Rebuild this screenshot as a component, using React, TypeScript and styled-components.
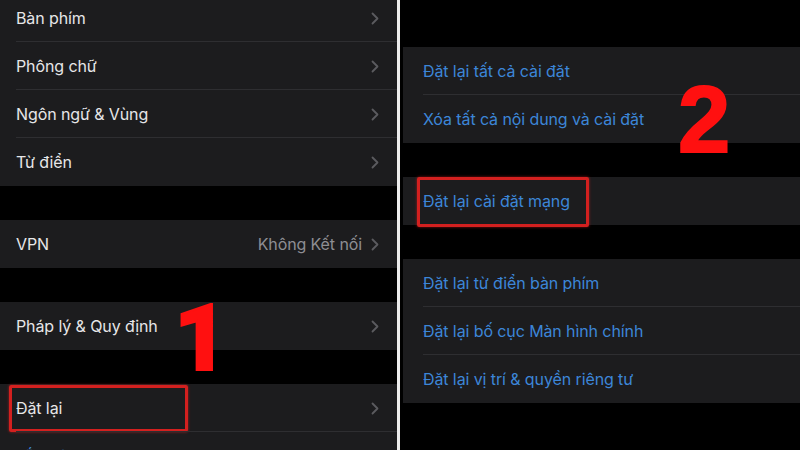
import React from 'react';
import styled, { createGlobalStyle } from 'styled-components';

const GlobalStyle = createGlobalStyle`
  html, body {
    margin: 0;
    padding: 0;
    background: #000;
  }
  body {
    font-family: Inter, "Liberation Sans", "Noto Sans", sans-serif;
    -webkit-font-smoothing: antialiased;
  }
`;

type Item = {
  label: string;
  value?: string;
  marked?: boolean;
};

const leftGroups: Item[][] = [
  [{ label: 'Bàn phím' }, { label: 'Phông chữ' }, { label: 'Ngôn ngữ & Vùng' }, { label: 'Từ điển' }],
  [{ label: 'VPN', value: 'Không Kết nối' }],
  [{ label: 'Pháp lý & Quy định' }],
  [{ label: 'Đặt lại', marked: true }, { label: 'Tắt máy' }],
];

const rightGroups: Item[][] = [
  [{ label: 'Đặt lại tất cả cài đặt' }, { label: 'Xóa tất cả nội dung và cài đặt' }],
  [{ label: 'Đặt lại cài đặt mạng', marked: true }],
  [
    { label: 'Đặt lại từ điển bàn phím' },
    { label: 'Đặt lại bố cục Màn hình chính' },
    { label: 'Đặt lại vị trí & quyền riêng tư' },
  ],
];

const Chevron = () => (
  <svg width="8" height="13" viewBox="0 0 8 13" fill="none">
    <path d="M1.5 1.5L6.5 6.5L1.5 11.5" stroke="#5b5b5f" strokeWidth="1.8" strokeLinecap="round" strokeLinejoin="round" />
  </svg>
);

const App: React.FC = () => {
  return (
    <>
      <GlobalStyle />
      <Screen>
        <LeftPane>
          <List $offset={-6}>
            {leftGroups.map((group, gi) => (
              <Group key={gi}>
                {group.map((item, i) => (
                  <Row key={item.label} $inset={16} $last={i === group.length - 1}>
                    <Label $blue={item.label === 'Tắt máy'}>{item.label}</Label>
                    {item.label !== 'Tắt máy' && (
                      <Trailing>
                        {item.value && <Value>{item.value}</Value>}
                        <Chevron />
                      </Trailing>
                    )}
                    {item.marked && <Highlight $left={9} $top={1} $width={179} $height={47} />}
                  </Row>
                ))}
              </Group>
            ))}
          </List>
          <StepNumber $left={174} $top={292} $narrow>1</StepNumber>
        </LeftPane>
        <Divider />
        <RightPane>
          <List $offset={47}>
            {rightGroups.map((group, gi) => (
              <Group key={gi}>
                {group.map((item, i) => (
                  <Row key={item.label} $inset={20} $last={i === group.length - 1}>
                    <Label $blue>{item.label}</Label>
                    {item.marked && <Highlight $left={14} $top={0} $width={172} $height={50} />}
                  </Row>
                ))}
              </Group>
            ))}
          </List>
          <StepNumber $left={278} $top={73}>2</StepNumber>
        </RightPane>
      </Screen>
    </>
  );
};

export default App;

const Screen = styled.div`
  display: flex;
  width: 800px;
  height: 450px;
  overflow: hidden;
  background: #000;
`;

const LeftPane = styled.div`
  position: relative;
  width: 397px;
  flex-shrink: 0;
`;

const Divider = styled.div`
  width: 3px;
  flex-shrink: 0;
  background: #ececec;
`;

const RightPane = styled.div`
  position: relative;
  flex: 1;
  padding-left: 3px;
`;

const List = styled.div<{ $offset: number }>`
  display: flex;
  flex-direction: column;
  gap: 34px;
  margin-top: ${(p) => p.$offset}px;
`;

const Group = styled.div`
  background: #1c1c1e;
`;

const Row = styled.div<{ $inset: number; $last: boolean }>`
  position: relative;
  height: 48px;
  display: flex;
  align-items: center;
  padding: 0 18px 0 ${(p) => p.$inset}px;
  box-sizing: border-box;

  &::after {
    content: '';
    display: ${(p) => (p.$last ? 'none' : 'block')};
    position: absolute;
    left: ${(p) => p.$inset}px;
    right: 0;
    bottom: 0;
    height: 1px;
    background: #2e2e31;
  }
`;

const Label = styled.span<{ $blue?: boolean }>`
  flex: 1;
  font-size: 16px;
  letter-spacing: -0.1px;
  color: ${(p) => (p.$blue ? '#3c86d8' : '#e6e6e8')};
  white-space: nowrap;
`;

const Trailing = styled.div`
  display: flex;
  align-items: center;
  gap: 9px;
`;

const Value = styled.span`
  font-size: 16px;
  letter-spacing: -0.1px;
  color: #8e8e93;
`;

const Highlight = styled.div<{ $left: number; $top: number; $width: number; $height: number }>`
  position: absolute;
  left: ${(p) => p.$left}px;
  top: ${(p) => p.$top}px;
  width: ${(p) => p.$width}px;
  height: ${(p) => p.$height}px;
  box-sizing: border-box;
  border: 3px solid #d3201f;
  border-radius: 2px;
  box-shadow: 0 0 3px rgba(255, 40, 40, 0.55);
  pointer-events: none;
`;

const StepNumber = styled.div<{ $left: number; $top: number; $narrow?: boolean }>`
  position: absolute;
  left: ${(p) => p.$left}px;
  top: ${(p) => p.$top}px;
  font-family: ${(p) => (p.$narrow ? 'Roboto, "Liberation Sans", sans-serif' : '"Liberation Sans", Arial, sans-serif')};
  font-weight: ${(p) => (p.$narrow ? 900 : 700)};
  font-size: ${(p) => (p.$narrow ? 93 : 94)}px;
  line-height: 1;
  color: #ff1010;
  -webkit-text-stroke: 2px #ff1010;
`;
